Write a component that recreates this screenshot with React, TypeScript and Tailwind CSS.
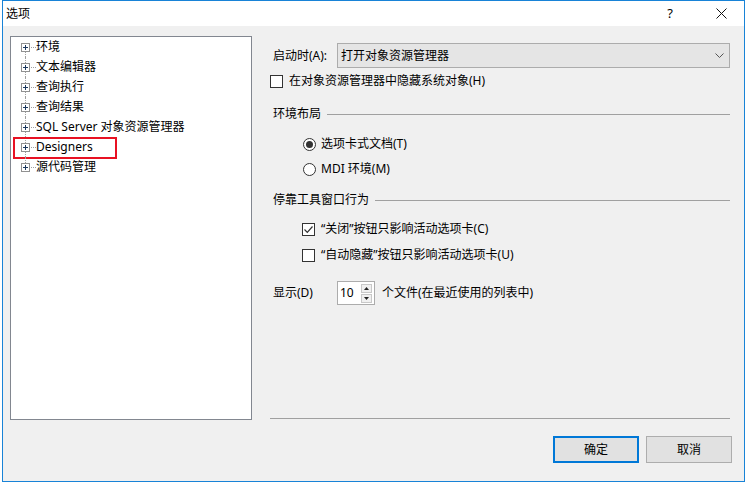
import { ReactNode } from "react";

const font = { fontFamily: '"Noto Sans", "Noto Sans CJK SC", sans-serif' };

const treeItems = ["环境", "文本编辑器", "查询执行", "查询结果", "SQL Server 对象资源管理器", "Designers", "源代码管理"];

function PlusBox() {
  return (
    <svg width="9" height="9" viewBox="0 0 9 9" className="shrink-0">
      <rect x="0.5" y="0.5" width="8" height="8" fill="#fff" stroke="#919191" />
      <path d="M2 4.5h5M4.5 2v5" stroke="#1e3a5f" strokeWidth="1" />
    </svg>
  );
}

function TreeRow({ label, first, last, marked }: { label: string; first: boolean; last: boolean; marked?: boolean }) {
  return (
    <div className="relative flex h-[20px] items-center pl-[10px]">
      {/* connector column */}
      <div className="relative flex h-full w-[9px] flex-col items-center">
        <div className={`h-[5.5px] w-0 ${first ? "" : "border-l border-dotted border-[#a0a0a0]"}`} />
        <PlusBox />
        <div className={`flex-1 w-0 ${last ? "" : "border-l border-dotted border-[#a0a0a0]"}`} />
      </div>
      <div className="ml-[1px] w-[5px] border-t border-dotted border-[#a0a0a0]" />
      <span className="text-[12px] leading-none text-black">{label}</span>
      {marked && <div className="absolute left-[2px] top-[0px] h-[22px] w-[104px] border-2 border-[#e81123]" />}
    </div>
  );
}

function CheckBox({ checked }: { checked?: boolean }) {
  return (
    <div className="flex h-[13px] w-[13px] items-center justify-center border border-[#333] bg-white">
      {checked && (
        <svg width="11" height="11" viewBox="0 0 11 11">
          <path d="M1.5 5.5l2.8 2.8L9.5 2.5" fill="none" stroke="#333" strokeWidth="1.2" />
        </svg>
      )}
    </div>
  );
}

function Radio({ checked }: { checked?: boolean }) {
  return (
    <div className="flex h-[13px] w-[13px] items-center justify-center rounded-full border border-[#333] bg-white">
      {checked && <div className="h-[7px] w-[7px] rounded-full bg-[#333]" />}
    </div>
  );
}

function GroupHeader({ children }: { children: ReactNode }) {
  return (
    <div className="flex h-[20px] items-center pl-[3px]">
      <span className="text-[12px] text-black">{children}</span>
      <div className="ml-[6px] h-px flex-1 bg-[#a0a0a0]" />
    </div>
  );
}

export default function App() {
  return (
    <div className="h-[484px] w-[747px] overflow-hidden bg-white" style={font}>
      <div className="ml-[2px] flex h-[482px] w-[743px] flex-col border border-[#1883d7] bg-[#f0f0f0]">
        {/* title bar */}
        <div className="flex h-[25px] shrink-0 items-center bg-white">
          <span className="ml-[3px] text-[12px] text-black">选项</span>
          <span className="ml-auto mr-[43px] text-[13px] text-black">?</span>
          <svg width="11" height="11" viewBox="0 0 11 11" className="mr-[17px]">
            <path d="M0.5 0.5l10 10M10.5 0.5l-10 10" stroke="#111" strokeWidth="1" />
          </svg>
        </div>

        {/* body */}
        <div className="flex flex-1">
          {/* tree */}
          <div className="ml-[7px] mt-[10px] h-[384px] w-[242px] border border-[#828790] bg-white">
            {treeItems.map((t, i) => (
              <TreeRow key={t} label={t} first={i === 0} last={i === treeItems.length - 1} marked={t === "Designers"} />
            ))}
          </div>

          {/* settings */}
          <div className="ml-[18px] flex w-[460px] flex-col pt-[17px] pb-[18px]">
            <div className="flex h-[25px] items-center">
              <span className="ml-[3px] w-[64px] text-[12px] text-black">启动时(A):</span>
              <div className="flex h-[25px] flex-1 items-center border border-[#acacac] bg-[#e5e5e5] pl-[3px] pr-[5px]">
                <span className="text-[12px] text-black">打开对象资源管理器</span>
                <svg width="9" height="6" viewBox="0 0 9 6" className="ml-auto">
                  <path d="M0.5 0.5l4 4 4-4" fill="none" stroke="#555" strokeWidth="1" />
                </svg>
              </div>
            </div>

            <div className="mt-[3px] flex h-[20px] items-center">
              <CheckBox />
              <span className="ml-[6px] text-[12px] text-black">在对象资源管理器中隐藏系统对象(H)</span>
            </div>

            <div className="mt-[13px]">
              <GroupHeader>环境布局</GroupHeader>
            </div>

            <div className="mt-[10px] flex h-[20px] items-center pl-[33px]">
              <Radio checked />
              <span className="ml-[5px] text-[12px] text-black">选项卡式文档(T)</span>
            </div>
            <div className="mt-[5px] flex h-[20px] items-center pl-[33px]">
              <Radio />
              <span className="ml-[5px] text-[12px] text-black">MDI 环境(M)</span>
            </div>

            <div className="mt-[11px]">
              <GroupHeader>停靠工具窗口行为</GroupHeader>
            </div>

            <div className="mt-[9px] flex h-[20px] items-center pl-[32px]">
              <CheckBox checked />
              <span className="ml-[6px] text-[12px] text-black">“关闭”按钮只影响活动选项卡(C)</span>
            </div>
            <div className="mt-[6px] flex h-[20px] items-center pl-[32px]">
              <CheckBox />
              <span className="ml-[6px] text-[12px] text-black">“自动隐藏”按钮只影响活动选项卡(U)</span>
            </div>

            <div className="mt-[16px] flex h-[24px] items-center">
              <span className="ml-[3px] w-[64px] text-[12px] text-black">显示(D)</span>
              <div className="flex h-[24px] w-[38px] items-center border border-[#acacac] bg-white pl-[2px]">
                <span className="text-[12px] text-black">10</span>
                <div className="ml-auto mr-[2px] flex flex-col gap-px">
                  <div className="flex h-[9px] w-[11px] items-center justify-center border border-[#c8c8c8] bg-[#f0f0f0]">
                    <svg width="5" height="3" viewBox="0 0 5 3"><path d="M2.5 0L5 3H0z" fill="#222" /></svg>
                  </div>
                  <div className="flex h-[9px] w-[11px] items-center justify-center border border-[#c8c8c8] bg-[#f0f0f0]">
                    <svg width="5" height="3" viewBox="0 0 5 3"><path d="M0 0h5L2.5 3z" fill="#222" /></svg>
                  </div>
                </div>
              </div>
              <span className="ml-[7px] text-[12px] text-black">个文件(在最近使用的列表中)</span>
            </div>

            <div className="mt-auto h-px w-[460px] bg-[#a0a0a0]" />

            <div className="mt-[17px] flex justify-end gap-[7px]">
              <button className="flex h-[27px] w-[86px] items-center justify-center border-2 border-[#0078d7] bg-[#e1e1e1] text-[12px] text-black">
                确定
              </button>
              <button className="mr-[-2px] flex h-[27px] w-[86px] items-center justify-center border border-[#adadad] bg-[#e1e1e1] text-[12px] text-black">
                取消
              </button>
            </div>
          </div>
        </div>
      </div>
    </div>
  );
}
